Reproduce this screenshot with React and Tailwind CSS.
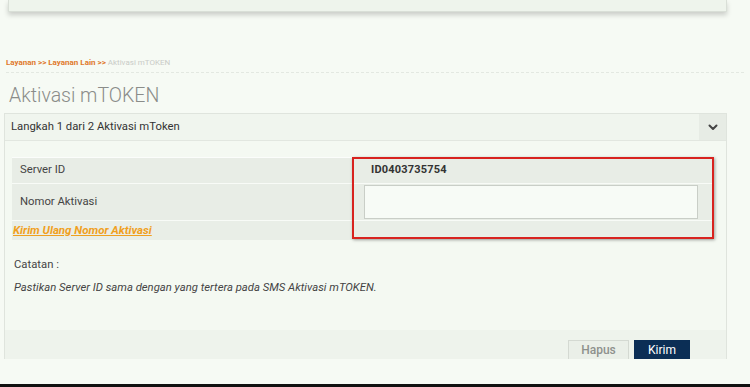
import React from 'react';

const font = { fontFamily: 'Roboto, "Liberation Sans", sans-serif' };

const Chevron = () => (
  <svg width="10" height="7" viewBox="0 0 10 7" fill="none">
    <path d="M1.5 1.5 L5 5 L8.5 1.5" stroke="#444" strokeWidth="2" strokeLinecap="round" strokeLinejoin="round" />
  </svg>
);

const App = () => {
  return (
    <div className="w-[750px] h-[387px] bg-[#f6faf4] overflow-hidden flex flex-col" style={font}>
      {/* top card (cut off) */}
      <div className="ml-[8px] w-[719px] h-[12px] shrink-0 bg-[#eef4ec] border-x border-b border-[#d9dfd7] shadow-[0_3px_5px_rgba(0,0,0,0.18)]" />

      {/* breadcrumb */}
      <div className="mt-[46px] mx-[6px] pb-[4px] border-b border-dashed border-[#e3e8e1] text-[8px] leading-[10px] font-bold text-[#e0792c]">
        Layanan &gt;&gt; Layanan Lain &gt;&gt; <span className="font-normal text-[#c9cbc7]">Aktivasi mTOKEN</span>
      </div>

      <h1 className="mt-[10px] ml-[9px] text-[19.5px] leading-[26px] font-light text-[#8a8c89]">Aktivasi mTOKEN</h1>

      {/* panel */}
      <div className="mt-[4px] ml-[4px] w-[723px] h-[246px] shrink-0 border-x border-t border-[#dfe4dd] bg-[#f4f9f2] flex flex-col">
        <div className="h-[27px] flex items-stretch bg-[#f0f5ee] border-b border-[#e2e7e0]">
          <div className="flex-1 flex items-center pl-[6px] text-[11.3px] text-[#333]">Langkah 1 dari 2 Aktivasi mToken</div>
          <div className="w-[27px] flex items-center justify-center bg-[#e7ece5]">
            <Chevron />
          </div>
        </div>

        <div className="px-[7px] pt-[16px]">
          <div className="relative w-[701px] border-t border-[#fbfdfb]">
            <div className="flex h-[26px] bg-[#e8ede6] border-b border-[#f8fbf7]">
              <div className="w-[348px] flex items-center pl-[8px] text-[11.3px] text-[#444]">Server ID</div>
              <div className="flex-1 flex items-center pl-[11px] text-[11px] font-bold text-[#333] tracking-[0.2px]">ID0403735754</div>
            </div>
            <div className="flex h-[37px] bg-[#e8ede6] border-b border-[#f8fbf7]">
              <div className="w-[348px] flex items-center pl-[8px] text-[11.3px] text-[#444]">Nomor Aktivasi</div>
              <div className="flex-1 flex items-center pl-[4px]">
                <div className="w-[334px] h-[34px] bg-[#f7fbf6] border border-[#c9cec7]" />
              </div>
            </div>
            <div className="flex h-[19px] bg-[#e9eee7] items-center pl-[1px]">
              <span className="text-[11.5px] font-bold italic underline text-[#f0a01e]">Kirim Ulang Nomor Aktivasi</span>
            </div>
            {/* highlight annotation */}
            <div className="absolute left-[340px] top-[-1px] w-[362px] h-[82px] border-[2px] border-[#d8231f] shadow-[1px_1px_3px_rgba(0,0,0,0.35)]" />
          </div>

          <div className="mt-[17px] ml-[2px] text-[11.3px] text-[#444]">Catatan :</div>
          <div className="mt-[6px] ml-[2px] text-[11.3px] italic text-[#444]">Pastikan Server ID sama dengan yang tertera pada SMS Aktivasi mTOKEN.</div>
        </div>

        <div className="mt-auto h-[29px] bg-[#eef3ec] flex items-end justify-end pr-[36px] gap-[5px]">
          <div className="w-[61px] h-[19px] bg-[#eaefe8] border border-[#d4d9d2] border-b-0 flex items-center justify-center text-[12px] text-[#8e918d] font-medium">Hapus</div>
          <div className="w-[56px] h-[19px] bg-[#0b2e55] flex items-center justify-center text-[12px] text-white">Kirim</div>
        </div>
      </div>

      <div className="mt-auto h-[3px] bg-[#111] shrink-0" />
    </div>
  );
};

export default App;
